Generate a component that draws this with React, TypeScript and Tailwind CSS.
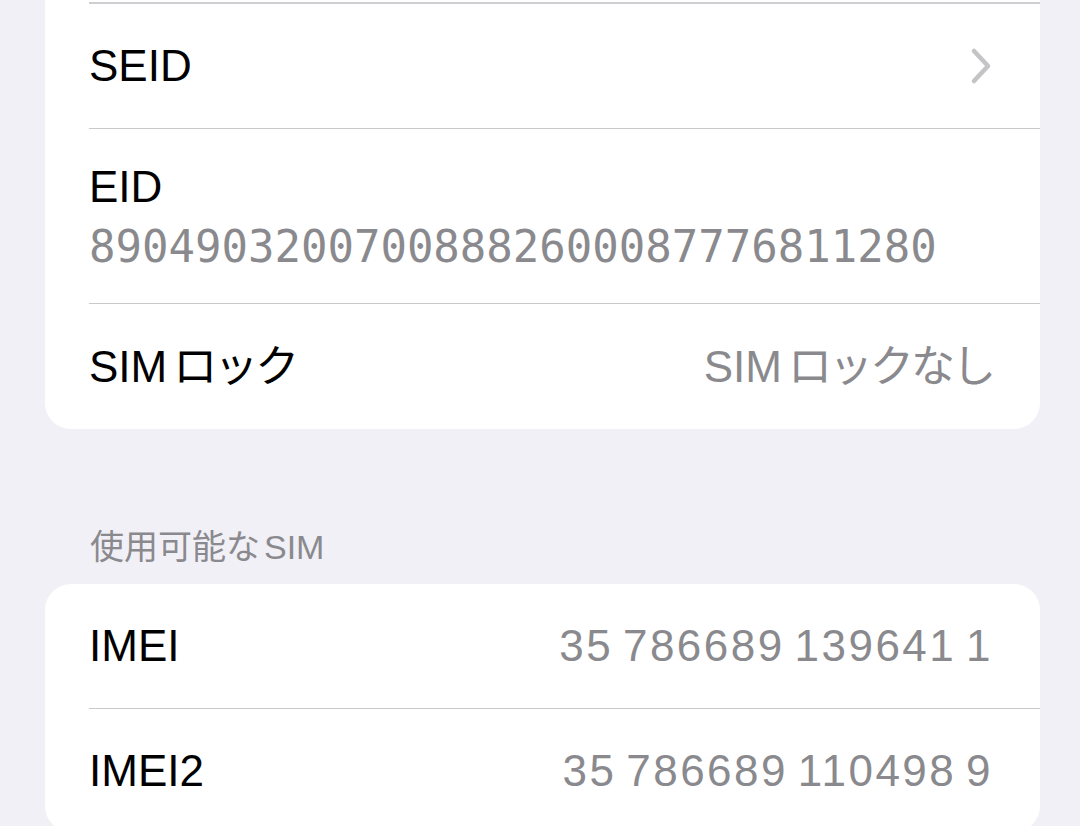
import {ReactNode} from 'react';

// Settings › General › About — the SIM section of the list.
const sans = 'font-["Liberation_Sans","Noto_Sans_CJK_JP",sans-serif]';

function Chevron() {
  return (
    <svg width="24" height="38" viewBox="0 0 24 38" fill="none" className="shrink-0">
      <path
        d="M5 4 L19 19 L5 34"
        stroke="#c4c4c7"
        strokeWidth="4.5"
        strokeLinecap="round"
        strokeLinejoin="round"
      />
    </svg>
  );
}

function Row({
  children,
  height,
  first,
}: {
  children: ReactNode;
  height: string;
  first?: boolean;
}) {
  return (
    <div className={`ml-[44px] pr-[47px] ${first ? '' : 'border-t border-[#c9c8cd]'} ${height} flex items-center`}>
      {children}
    </div>
  );
}

export default function App() {
  return (
    <div className={`h-[826px] overflow-hidden bg-[#f1f0f6] pl-[45px] pr-[40px] ${sans}`}>
      {/* SIM / carrier info card, scrolled so its top is off screen */}
      <div className="rounded-b-[26px] bg-white pt-[2px]">
        <div className="ml-[44px] border-t-2 border-[#cfcfd3]" />
        <Row height="h-[124px]" first>
          <span className="flex-1 text-[44px] text-black">SEID</span>
          <Chevron />
        </Row>
        <Row height="h-[175px]">
          <div className="flex flex-col pt-[2px]">
            <span className="text-[44px] leading-[60px] text-black">EID</span>
            <span className='font-["DejaVu_Sans_Mono",monospace] text-[44px] leading-[60px] text-[#8a8a8e]'>
              89049032007008882600087776811280
            </span>
          </div>
        </Row>
        <Row height="h-[126px]">
          <span className="flex-1 text-[44px] text-black">
            SIM<span className="ml-[6px] tracking-[-3px]">ロック</span>
          </span>
          <span className="text-[44px] text-[#8a8a8e]">
            SIM<span className="ml-[6px] tracking-[-3px]">ロックなし</span>
          </span>
        </Row>
      </div>

      <div className="pl-[45px] pt-[98px] pb-[16px] text-[34px] leading-[41px] text-[#8a8a8e]">
        使用可能な<span className="ml-[4px]">SIM</span>
      </div>

      <div className="rounded-[26px] bg-white">
        <Row height="h-[124px]" first>
          <span className="flex-1 text-[44px] text-black">IMEI</span>
          <span className="text-[44px] tracking-[2.5px] [word-spacing:-5px] text-[#8a8a8e]">35 786689 139641 1</span>
        </Row>
        <Row height="h-[124px]">
          <span className="flex-1 text-[44px] text-black">IMEI2</span>
          <span className="text-[44px] tracking-[2.5px] [word-spacing:-5px] text-[#8a8a8e]">35 786689 110498 9</span>
        </Row>
      </div>
    </div>
  );
}
